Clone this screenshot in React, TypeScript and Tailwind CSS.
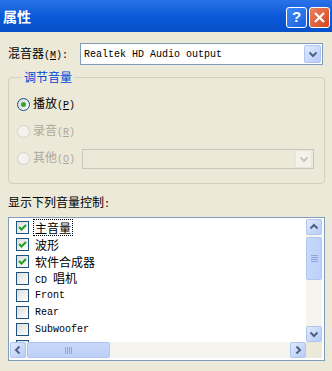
import React from 'react';

const cjk = "font-['Noto_Sans_CJK_SC',sans-serif]";
const mono = "font-['Liberation_Mono',monospace] text-[10px]";

type Dir = 'up' | 'down' | 'left' | 'right';

const arrowPath: Record<Dir, string> = {
  up: 'M3.5 8.5 L7 5 L10.5 8.5',
  down: 'M3.5 5.5 L7 9 L10.5 5.5',
  left: 'M8.5 3.5 L5 7 L8.5 10.5',
  right: 'M5.5 3.5 L9 7 L5.5 10.5',
};

const Arrow = ({ dir, color = '#4d6185' }: { dir: Dir; color?: string }) => (
  <svg width="14" height="14" viewBox="0 0 14 14">
    <path d={arrowPath[dir]} fill="none" stroke={color} strokeWidth="2" />
  </svg>
);

const ScrollButton = ({ dir }: { dir: Dir }) => (
  <div className="w-[16px] h-[16px] shrink-0 rounded-[2px] border border-[#b1c5f1] bg-gradient-to-br from-[#e1eafe] to-[#b6cbf7] flex items-center justify-center">
    <Arrow dir={dir} />
  </div>
);

const DropButton = ({ disabled }: { disabled?: boolean }) => (
  <div
    className={`w-[17px] h-[18px] shrink-0 rounded-[2px] border flex items-center justify-center ${
      disabled
        ? 'border-[#e6e4dc] bg-[#f3f2ec]'
        : 'border-[#b1c5f1] bg-gradient-to-br from-[#e1eafe] to-[#b6cbf7]'
    }`}
  >
    <Arrow dir="down" color={disabled ? '#c9c7ba' : '#4d6185'} />
  </div>
);

const Radio = ({ checked, disabled, children }: { checked?: boolean; disabled?: boolean; children: React.ReactNode }) => (
  <div className="flex items-center gap-[3px]">
    <span
      className={`w-[13px] h-[13px] rounded-full border flex items-center justify-center ${
        disabled ? 'border-[#d4d2c6] bg-[#f3f2ec]' : 'border-[#1c5180] bg-gradient-to-br from-[#d6d6d0] to-white'
      }`}
    >
      {checked && <span className="w-[5px] h-[5px] rounded-full bg-[#31a531]" />}
    </span>
    <span className={`text-[12px] leading-[16px] ${cjk} ${disabled ? 'text-[#aca899]' : 'text-black'}`}>{children}</span>
  </div>
);

const Check = ({ checked }: { checked?: boolean }) => (
  <span className="w-[13px] h-[13px] shrink-0 border border-[#1c5180] bg-gradient-to-br from-[#dcdcd7] to-white flex items-center justify-center">
    {checked && (
      <svg width="9" height="9" viewBox="0 0 9 9">
        <path d="M1 4 L3.5 6.5 L8 2" fill="none" stroke="#21a121" strokeWidth="2" />
      </svg>
    )}
  </span>
);

const items: { label?: React.ReactNode; checked?: boolean; focus?: boolean }[] = [
  { label: <span className={cjk + ' text-[12px]'}>主音量</span>, checked: true, focus: true },
  { label: <span className={cjk + ' text-[12px]'}>波形</span>, checked: true },
  { label: <span className={cjk + ' text-[12px]'}>软件合成器</span>, checked: true },
  {
    label: (
      <span>
        <span className={mono}>CD&nbsp;</span>
        <span className={cjk + ' text-[12px]'}>唱机</span>
      </span>
    ),
  },
  { label: <span className={mono}>Front</span> },
  { label: <span className={mono}>Rear</span> },
  { label: <span className={mono}>Subwoofer</span> },
  {},
];

const Grip = ({ vertical }: { vertical?: boolean }) => (
  <div className={`flex ${vertical ? 'flex-col gap-[1px]' : 'flex-row gap-[1px]'}`}>
    {[0, 1, 2, 3].map((i) => (
      <span key={i} className={vertical ? 'w-[7px] h-[1px] bg-[#8ca5e0]' : 'w-[1px] h-[7px] bg-[#8ca5e0]'} />
    ))}
  </div>
);

export default function App() {
  return (
    <div className="w-[332px] h-[371px] bg-[#ece9d8] overflow-hidden">
      {/* title bar */}
      <div className="h-[32px] flex items-center justify-between pl-[3px] pr-[2px] bg-gradient-to-b from-[#2a72e8] via-[#0a59d8] to-[#0650c8]">
        <span className={`text-white font-bold text-[14px] ${cjk}`}>属性</span>
        <div className="flex items-center gap-[2px] mt-[2px]">
          <div className="w-[21px] h-[21px] rounded-[3px] border border-white bg-gradient-to-br from-[#3d8af7] to-[#1a5fe0] flex items-center justify-center text-white font-bold text-[15px] font-['Liberation_Sans',sans-serif]">
            ?
          </div>
          <div className="w-[21px] h-[21px] rounded-[3px] border border-white bg-gradient-to-br from-[#e8825e] to-[#d2441c] flex items-center justify-center">
            <svg width="13" height="13" viewBox="0 0 13 13">
              <path d="M2 2 L11 11 M11 2 L2 11" stroke="white" strokeWidth="2.2" />
            </svg>
          </div>
        </div>
      </div>

      <div className="px-[8px] pr-[7px]">
        {/* mixer row */}
        <div className="mt-[11px] h-[22px] flex items-center">
          <div className={`w-[72px] text-[12px] leading-[16px] ${cjk}`}>
            混音器
            <span className={mono}>
              (<span className="underline">M</span>):
            </span>
          </div>
          <div className="w-[243px] h-[22px] border border-[#7f9db9] bg-white flex items-center pl-[3px] pr-[1px]">
            <span className={`flex-1 ${mono}`}>Realtek HD Audio output</span>
            <DropButton />
          </div>
        </div>

        {/* group box */}
        <fieldset className="mt-[4px] border border-[#d0d0bf] rounded-[4px] pl-[8px] pr-[10px] pb-[11px]">
          <legend className={`ml-[5px] px-[2px] text-[12px] leading-[16px] text-[#0046d5] ${cjk}`}>调节音量</legend>
          <div className="mt-[6px] h-[27px] flex items-center">
            <Radio checked>
              播放<span className={mono}>(<span className="underline">P</span>)</span>
            </Radio>
          </div>
          <div className="h-[27px] flex items-center">
            <Radio disabled>
              录音<span className={mono}>(<span className="underline">R</span>)</span>
            </Radio>
          </div>
          <div className="h-[27px] flex items-center">
            <div className="w-[65px]">
              <Radio disabled>
                其他<span className={mono}>(<span className="underline">O</span>)</span>
              </Radio>
            </div>
            <div className="flex-1 h-[20px] border border-[#c9c7ba] bg-[#ece9d8] flex items-center justify-end pr-[1px]">
              <DropButton disabled />
            </div>
          </div>
        </fieldset>

        <div className={`mt-[10px] text-[12px] leading-[16px] ${cjk}`}>
          显示下列音量控制<span className={mono}>:</span>
        </div>

        {/* list */}
        <div className="mt-[4px] h-[144px] border border-[#7f9db9] bg-white pl-[1px] pt-[1px] pr-[2px] pb-[2px] flex flex-col">
          <div className="flex-1 min-h-0 flex">
            <div className="flex-1 overflow-hidden">
              {items.map((it, i) => (
                <div key={i} className="h-[17px] flex items-center pl-[6px]">
                  <Check checked={it.checked} />
                  {it.label && (
                    <span
                      className={`ml-[4px] px-[1px] h-[17px] flex items-center leading-[15px] border ${
                        it.focus ? 'border-dotted border-black' : 'border-transparent'
                      }`}
                    >
                      {it.label}
                    </span>
                  )}
                </div>
              ))}
            </div>
            <div className="w-[16px] flex flex-col bg-[#f5f4ef]">
              <ScrollButton dir="up" />
              <div className="flex-1 flex flex-col pt-[2px]">
                <div className="h-[43px] rounded-[2px] border border-[#b1c5f1] bg-gradient-to-r from-[#c8d8fc] to-[#bdd0f9] flex items-center justify-center">
                  <Grip vertical />
                </div>
              </div>
              <ScrollButton dir="down" />
            </div>
          </div>
          <div className="h-[16px] flex">
            <div className="flex-1 flex bg-[#f5f4ef]">
              <ScrollButton dir="left" />
              <div className="flex-1 flex pl-[1px]">
                <div className="w-[83px] rounded-[2px] border border-[#b1c5f1] bg-gradient-to-b from-[#c8d8fc] to-[#bdd0f9] flex items-center justify-center">
                  <Grip />
                </div>
              </div>
              <ScrollButton dir="right" />
            </div>
            <div className="w-[16px] bg-[#ece9d8]" />
          </div>
        </div>
      </div>
    </div>
  );
}
